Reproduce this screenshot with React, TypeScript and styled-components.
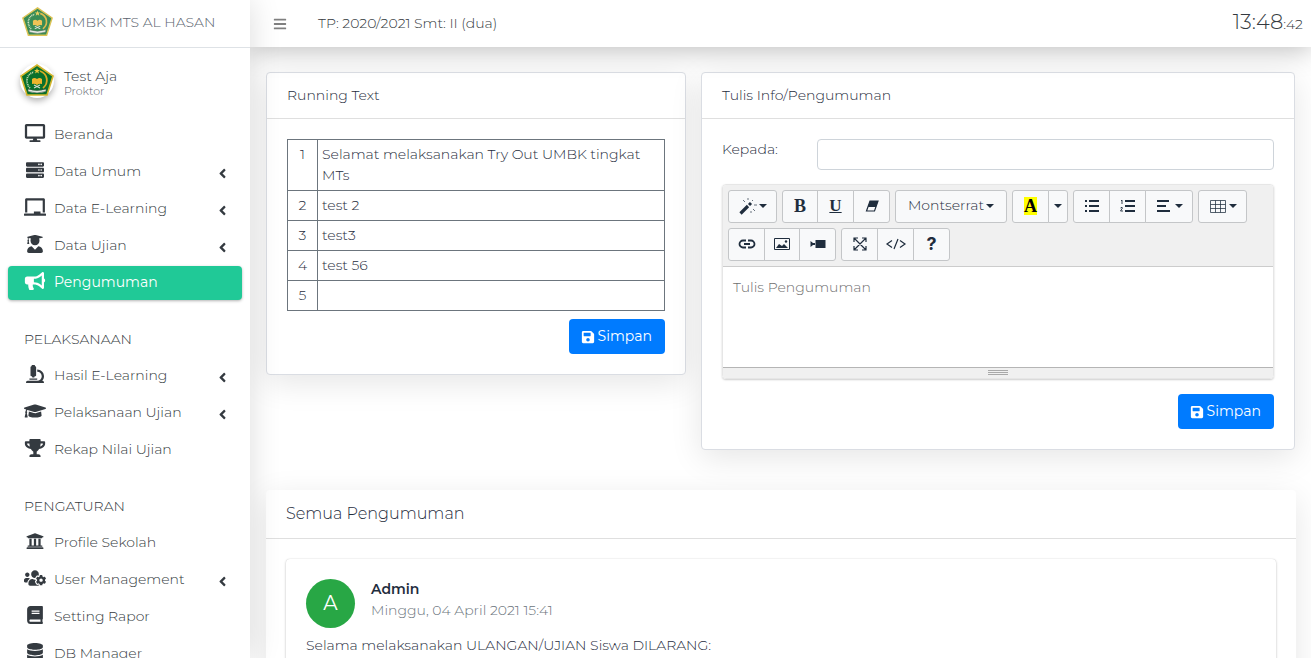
import React, { useState } from "react";
import styled, { createGlobalStyle, css } from "styled-components";
import {
  FaAngleLeft, FaBars, FaBook, FaBullhorn, FaChalkboard, FaDatabase, FaDesktop,
  FaGraduationCap, FaMicroscope, FaSave, FaServer, FaTrophy, FaUniversity,
  FaUserGraduate, FaUsersCog,
} from "react-icons/fa";
import type { IconType } from "react-icons";

const GlobalStyle = createGlobalStyle`
  *, *::before, *::after { box-sizing: border-box; }
  html, body { margin: 0; }
  body {
    font-family: Montserrat, Inter, "Open Sans", sans-serif;
    font-size: 14px;
    font-weight: 300;
    line-height: 21px;
    color: #1f2d3d;
    background: #fff;
    overflow: hidden;
  }
  button, input, textarea { font: inherit; color: inherit; }
  h1, h2, h3, p, ul { margin: 0; padding: 0; font-weight: inherit; }
  ul { list-style: none; }
`;

const Shell = styled.div`
  display: grid;
  grid-template-columns: 250px minmax(0, 1fr);
  height: 100vh;
  overflow: hidden;
`;

const Sidebar = styled.aside`
  position: relative;
  z-index: 3;
  overflow: hidden;
  background: #fff;
  color: #343a40;
  height: 100%;
  box-shadow: 0 0 30px rgba(0, 0, 0, 0.14);
`;

const Brand = styled.a`
  display: flex;
  align-items: center;
  gap: 8px;
  height: 48px;
  padding: 0 22px 2px;
  border-bottom: 1px solid #dee2e6;
  color: #59636e;
  text-decoration: none;
  white-space: nowrap;
`;

const UserPanel = styled.div`
  display: flex;
  align-items: flex-start;
  gap: 8px;
  height: 70px;
  padding: 16px 20px 0;
`;

const Avatar = styled.span`
  display: flex;
  width: 34px;
  height: 34px;
  border-radius: 50%;
  box-shadow: 0 3px 6px rgba(0, 0, 0, 0.3);
`;

const UserName = styled.a`
  display: flex;
  flex-direction: column;
  padding: 4px 2px;
  color: #343a40;
  line-height: 16px;
  text-decoration: none;
  small { font-size: 11px; line-height: 14px; color: #59626b; }
`;

const Nav = styled.nav`
  padding: 0 8px;
`;

const NavLink = styled.a<{ $active?: boolean }>`
  display: flex;
  align-items: center;
  height: 34px;
  margin-bottom: 3px;
  padding: 0 15px 2px 16px;
  border-radius: 4px;
  color: #343a40;
  text-decoration: none;
  > svg:first-child { width: 22px; height: 18px; margin: 0 8px 3px 0; flex: none; }
  > span { flex: 1; white-space: nowrap; }
  ${(p) => p.$active && css`
    background: #20c997;
    color: #fff;
    font-weight: 400;
    box-shadow: 0 1px 3px rgba(0, 0, 0, 0.3);
  `}
`;

const Arrow = styled(FaAngleLeft)`
  width: 9px;
  height: 15px;
  margin-top: 4px;
`;

const NavHeader = styled.h2`
  padding: 26px 16px 9px;
  font-size: 14px;
  line-height: 21px;
`;

const Page = styled.div`
  display: flex;
  flex-direction: column;
  min-width: 0;
  height: 100vh;
  overflow: hidden;
`;

const TopBar = styled.header`
  position: relative;
  z-index: 2;
  display: flex;
  align-items: center;
  flex: none;
  height: 47px;
  padding: 0 8px 0 15px;
  background: #fff;
  color: #343a40;
  box-shadow: 0 4px 26px rgba(0, 0, 0, 0.25);
`;

const MenuButton = styled.button`
  display: flex;
  padding: 6px 8px;
  margin-right: 23px;
  border: 0;
  background: none;
  color: #808080;
`;

const Clock = styled.time`
  margin-left: auto;
  padding-bottom: 2px;
  font-size: 21px;
  small { font-size: 14px; }
`;

const Main = styled.main`
  padding: 25px 15px 0 16px;
`;

const Columns = styled.div`
  display: grid;
  grid-template-columns: minmax(0, 420fr) minmax(0, 594fr);
  align-items: start;
  gap: 15px;
  margin-bottom: 40px;
  padding-right: 1px;
`;

const Card = styled.section<{ $outlined?: boolean }>`
  border: ${(p) => (p.$outlined ? "1px solid #dadde3" : "0")};
  border-radius: 4px;
  background: #fff;
  box-shadow: 0 8px 32px rgba(0, 0, 0, 0.1);
`;

const CardTitle = styled.h2<{ $large?: boolean }>`
  padding: 12px 20px;
  border-bottom: 1px solid #dfdfdf;
  font-size: ${(p) => (p.$large ? "16px" : "14px")};
  line-height: ${(p) => (p.$large ? "24px" : "21px")};
`;

const CardBody = styled.div`
  padding: 20px;
`;

const RunningTable = styled.table`
  width: 100%;
  border-collapse: collapse;
  td, th {
    height: 30px;
    padding: 4px;
    border: 1px solid #6c757d;
    vertical-align: top;
    text-align: left;
    font-weight: 300;
  }
  th { width: 30px; text-align: center; }
`;

const Actions = styled.div<{ $gap: number }>`
  display: flex;
  justify-content: flex-end;
  margin-top: ${(p) => p.$gap}px;
`;

const SaveButton = styled.button`
  display: flex;
  align-items: center;
  gap: 3px;
  height: 35px;
  padding: 0 13px 0 12px;
  border: 0;
  border-radius: 4px;
  background: #007bff;
  color: #fff;
  font-weight: 400;
`;

const Field = styled.div`
  display: flex;
  gap: 10px;
  margin-bottom: 14px;
  label { width: 85px; }
  input {
    flex: 1;
    min-width: 0;
    height: 31px;
    padding: 4px 8px;
    border: 1px solid #ced4da;
    border-radius: 4px;
  }
`;

const Editor = styled.div`
  display: flex;
  flex-direction: column;
  border-radius: 4px;
  overflow: hidden;
  border: 1px solid #e6e6e6;
  box-shadow: 0 1px 2px rgba(0, 0, 0, 0.2);
  textarea {
    height: 100px;
    padding: 10px;
    border: 0;
    resize: none;
    display: block;
    &::placeholder { color: #6f6f6f; opacity: 1; }
  }
`;

const Toolbar = styled.div`
  display: flex;
  flex-wrap: wrap;
  gap: 5px;
  padding: 5px;
  background: #f0f0f0;
  border-bottom: 1px solid #ccc;
`;

const ToolGroup = styled.div`
  display: flex;
  height: 33px;
`;

const Tool = styled.button<{ $w: number }>`
  display: flex;
  align-items: center;
  justify-content: center;
  gap: 2px;
  width: ${(p) => p.$w}px;
  padding: 0 0 2px;
  margin-left: -1px;
  border: 1px solid #c4c6c8;
  background: #f8f9fa;
  &:first-child { margin-left: 0; border-radius: 3px 0 0 3px; }
  &:last-child { border-radius: 0 3px 3px 0; }
  &:only-child { border-radius: 3px; }
`;

const Letter = styled.span<{ $kind: "bold" | "underline" | "color" | "help" }>`
  font-family: ${(p) => (p.$kind === "help" ? "Inter, sans-serif" : '"Liberation Serif", serif')};
  font-size: 18px;
  line-height: 18px;
  font-weight: 700;
  ${(p) => p.$kind === "underline" && "font-size: 17px; text-decoration: underline; text-decoration-thickness: 1px;"}
  ${(p) => p.$kind === "color" && "background: #ff0; color: #000;"}
`;

const Caret = styled.i`
  border: 4px solid transparent;
  border-top-color: currentColor;
  border-bottom: 0;
`;

const ResizeBar = styled.div`
  display: flex;
  flex-direction: column;
  align-items: center;
  gap: 1px;
  height: 11px;
  padding-top: 2px;
  border-top: 1px solid #b5b5b5;
  background: #f0f0f0;
  i { width: 20px; border-top: 1px solid #a9a9a9; }
`;

const Post = styled.article`
  border-radius: 4px;
  padding: 20px;
  box-shadow: 0 0 1px rgba(0, 0, 0, 0.2), 0 1px 3px rgba(0, 0, 0, 0.2);
`;

const PostHeader = styled.header`
  display: flex;
  align-items: flex-start;
  gap: 16px;
  margin-bottom: 7px;
  strong { display: block; font-weight: 600; }
  time { color: #6c757d; }
`;

const Initial = styled.span`
  display: flex;
  align-items: center;
  justify-content: center;
  width: 49px;
  height: 49px;
  border-radius: 50%;
  background: #28a745;
  color: #fff;
  font-size: 20px;
  font-weight: 400;
`;

function Emblem({ size, muted = false }: { size: number; muted?: boolean }) {
  return (
    <svg width={size} height={size} viewBox="0 0 34 34" opacity={muted ? 0.8 : 1} aria-hidden="true">
      <path d="M17 1 L33 12 L27 31 H7 L1 12 Z" fill="#08702b" stroke="#d4b52d" strokeWidth="1.6" />
      <path d="M10 24 C5 19 6 10 14 8" fill="none" stroke="#c9dcb8" strokeWidth="1.800" strokeDasharray="1 .8" />
      <path d="M20 7 C28 10 29 19 23 24" fill="none" stroke="#d8aa25" strokeWidth="1.800" />
      <path d="M12 15 Q14.500 13 17 15 Q19.500 13 22 15 V20 Q19.500 19 17 21 Q14.500 19 12 20 Z" fill="#edb52c" />
      <path d="M14 24 L20 21 M14 21 L20 24" stroke="#d8d9d0" strokeWidth="1.100" />
      <path d="M8 25 Q17 28 26 25 V27.500 Q17 30.500 8 27.500 Z" fill="#e4e9e0" stroke="#37543f" strokeWidth=".6" />
      <path d="M17 4 L17.800 6 H20 L18.300 7.300 L19 9.500 L17 8.200 L15 9.500 L15.700 7.300 L14 6 H16.200 Z" fill="#e8c63b" />
    </svg>
  );
}

const drawings: Record<string, React.ReactNode> = {
  magic: <><path d="M1.500 16.500 L9 9" strokeWidth="3.200" /><path d="M10 8 L12 6" strokeWidth="3" /><path d="M9 1v2M4 3l2 2M14 3l-1 1M15 8h3M14 12l2 2M12 14v2" strokeWidth="1" opacity=".65" /></>,
  eraser: <><path d="M7 4h8l-2 6h-8z" fill="currentColor" stroke="none" /><path d="M7 4h8l-3.500 10h-8z" strokeWidth="1.200" fill="none" /></>,
  list: <><path d="M2 4h2M2 9h2M2 14h2" strokeWidth="2.200" /><path d="M6 4h10M6 9h10M6 14h10" strokeWidth="2" /></>,
  numbers: <><path d="M6 4h10M6 9h10M6 14h10" strokeWidth="2" /><path d="M2 4l1-1v4M1.500 11q2-1.500 2 0L1.500 14h2.500" strokeWidth=".9" fill="none" /></>,
  align: <path d="M2 4h12M2 9h9M2 14h13" strokeWidth="2" />,
  grid: <path d="M1.500 3.500h15v12h-15zM1.500 7.500h15M1.500 11.500h15M6.500 3.500v12M11.500 3.500v12" strokeWidth="1" fill="none" opacity=".75" />,
  link: <path d="M8 5.500H5a3.500 3.500 0 0 0 0 7h3M10 5.500h3a3.500 3.500 0 0 1 0 7h-3M6 9h6" strokeWidth="1.800" fill="none" />,
  picture: <><path d="M1.500 3.500h15v11h-15z" fill="none" strokeWidth="1" /><path d="M3 13l3-4 3 2 2-2 4 4z" fill="currentColor" stroke="none" /><circle cx="13" cy="6.500" r="1.200" fill="currentColor" stroke="none" /></>,
  video: <path d="M6.500 5h10v8h-10zM1.500 6v6l2.500-2h2v-2h-2z" fill="currentColor" stroke="none" />,
  expand: <path d="M3 7V3h4M11 3h4v4M15 11v4h-4M7 15H3v-4M3 3l12 12M15 3L3 15" strokeWidth="1.200" fill="none" />,
  code: <path d="M5 5.500L0 9l5 3.500M13 5.500l5 3.500-5 3.500M11 4L7 14" strokeWidth="1.200" fill="none" />,
};

function ToolIcon({ name }: { name: string }) {
  return (
    <svg width="18" height="18" viewBox="0 0 18 18" stroke="currentColor" overflow="visible" aria-hidden="true">
      {drawings[name]}
    </svg>
  );
}

type Item = { label: string; icon: IconType; children?: boolean };
const groups: { title?: string; items: Item[] }[] = [
  { items: [
    { label: "Beranda", icon: FaDesktop },
    { label: "Data Umum", icon: FaServer, children: true },
    { label: "Data E-Learning", icon: FaChalkboard, children: true },
    { label: "Data Ujian", icon: FaUserGraduate, children: true },
    { label: "Pengumuman", icon: FaBullhorn },
  ] },
  { title: "PELAKSANAAN", items: [
    { label: "Hasil E-Learning", icon: FaMicroscope, children: true },
    { label: "Pelaksanaan Ujian", icon: FaGraduationCap, children: true },
    { label: "Rekap Nilai Ujian", icon: FaTrophy },
  ] },
  { title: "PENGATURAN", items: [
    { label: "Profile Sekolah", icon: FaUniversity },
    { label: "User Management", icon: FaUsersCog, children: true },
    { label: "Setting Rapor", icon: FaBook },
    { label: "DB Manager", icon: FaDatabase },
  ] },
];

const runningTexts = ["Selamat melaksanakan Try Out UMBK tingkat MTs", "test 2", "test3", "test 56", ""];

function Save() {
  return <SaveButton type="button"><FaSave size={14} />Simpan</SaveButton>;
}

export default function App() {
  const [message, setMessage] = useState("");
  return (
    <>
      <GlobalStyle />
      <Shell>
        <Sidebar>
          <Brand href="#"><Emblem size={31} muted />UMBK MTS AL HASAN</Brand>
          <UserPanel>
            <Avatar><Emblem size={34} /></Avatar>
            <UserName href="#">Test Aja<small>Proktor</small></UserName>
          </UserPanel>
          <Nav>
            {groups.map((group, i) => (
              <React.Fragment key={i}>
                {group.title && <NavHeader>{group.title}</NavHeader>}
                <ul>
                  {group.items.map(({ label, icon: Icon, children }) => (
                    <li key={label}>
                      <NavLink href="#" $active={label === "Pengumuman"}>
                        <Icon /><span>{label}</span>{children && <Arrow />}
                      </NavLink>
                    </li>
                  ))}
                </ul>
              </React.Fragment>
            ))}
          </Nav>
        </Sidebar>
        <Page>
          <TopBar>
            <MenuButton type="button" aria-label="Menu"><FaBars size={14} /></MenuButton>
            <span>TP: 2020/2021 Smt: II (dua)</span>
            <Clock>13:48<small>:42</small></Clock>
          </TopBar>
          <Main>
            <Columns>
              <Card $outlined>
                <CardTitle>Running Text</CardTitle>
                <CardBody>
                  <RunningTable>
                    <tbody>
                      {runningTexts.map((text, i) => <tr key={i}><th scope="row">{i + 1}</th><td>{text}</td></tr>)}
                    </tbody>
                  </RunningTable>
                  <Actions $gap={8}><Save /></Actions>
                </CardBody>
              </Card>
              <Card $outlined>
                <CardTitle>Tulis Info/Pengumuman</CardTitle>
                <CardBody>
                  <Field><label htmlFor="to">Kepada:</label><input id="to" type="text" /></Field>
                  <Editor>
                    <Toolbar>
                      <ToolGroup><Tool $w={49} aria-label="Style"><ToolIcon name="magic" /><Caret /></Tool></ToolGroup>
                      <ToolGroup>
                        <Tool $w={36}><Letter $kind="bold">B</Letter></Tool>
                        <Tool $w={37}><Letter $kind="underline">U</Letter></Tool>
                        <Tool $w={37} aria-label="Remove formatting"><ToolIcon name="eraser" /></Tool>
                      </ToolGroup>
                      <ToolGroup><Tool $w={112}>Montserrat<Caret /></Tool></ToolGroup>
                      <ToolGroup>
                        <Tool $w={37}><Letter $kind="color">A</Letter></Tool>
                        <Tool $w={20} aria-label="More colors"><Caret /></Tool>
                      </ToolGroup>
                      <ToolGroup>
                        <Tool $w={37} aria-label="Bullets"><ToolIcon name="list" /></Tool>
                        <Tool $w={37} aria-label="Numbering"><ToolIcon name="numbers" /></Tool>
                        <Tool $w={48} aria-label="Paragraph"><ToolIcon name="align" /><Caret /></Tool>
                      </ToolGroup>
                      <ToolGroup><Tool $w={49} aria-label="Table"><ToolIcon name="grid" /><Caret /></Tool></ToolGroup>
                      <ToolGroup>
                        <Tool $w={37} aria-label="Link"><ToolIcon name="link" /></Tool>
                        <Tool $w={36} aria-label="Picture"><ToolIcon name="picture" /></Tool>
                        <Tool $w={37} aria-label="Video"><ToolIcon name="video" /></Tool>
                      </ToolGroup>
                      <ToolGroup>
                        <Tool $w={37} aria-label="Full screen"><ToolIcon name="expand" /></Tool>
                        <Tool $w={37} aria-label="Code view"><ToolIcon name="code" /></Tool>
                        <Tool $w={37}><Letter $kind="help">?</Letter></Tool>
                      </ToolGroup>
                    </Toolbar>
                    <textarea aria-label="Pengumuman" placeholder="Tulis Pengumuman" value={message} onChange={(e) => setMessage(e.target.value)} />
                    <ResizeBar><i /><i /><i /></ResizeBar>
                  </Editor>
                  <Actions $gap={15}><Save /></Actions>
                </CardBody>
              </Card>
            </Columns>
            <Card>
              <CardTitle $large>Semua Pengumuman</CardTitle>
              <CardBody>
                <Post>
                  <PostHeader>
                    <Initial>A</Initial>
                    <div><strong>Admin</strong><time>Minggu, 04 April 2021 15:41</time></div>
                  </PostHeader>
                  <p>Selama melaksanakan ULANGAN/UJIAN Siswa DILARANG:</p>
                </Post>
              </CardBody>
            </Card>
          </Main>
        </Page>
      </Shell>
    </>
  );
}
